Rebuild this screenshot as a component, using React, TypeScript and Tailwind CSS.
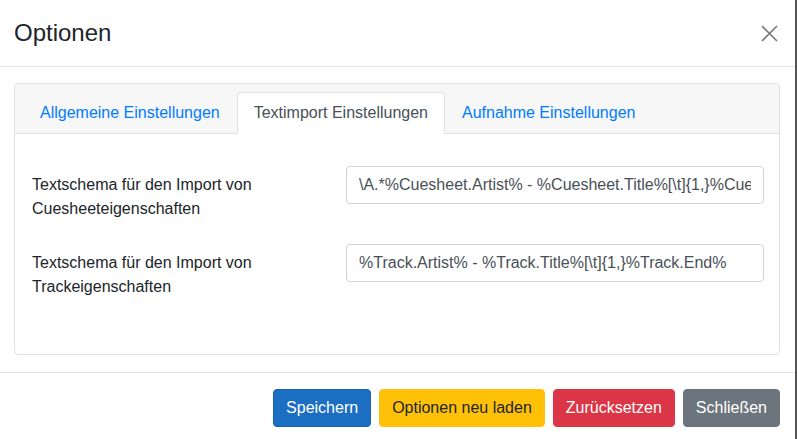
import { useState } from 'react';

const tabs = ['Allgemeine Einstellungen', 'Textimport Einstellungen', 'Aufnahme Einstellungen'];

function Field({ label, value }: { label: string; value: string }) {
  return (
    <div className="grid grid-cols-[298px_1fr] gap-4">
      <label className="pt-[7px] text-[16px] leading-6 text-[#212529]">{label}</label>
      <input
        readOnly
        value={value}
        className="h-[38px] w-full rounded border border-[#ced4da] bg-white px-3 text-[16px] text-[#495057] outline-none"
      />
    </div>
  );
}

export default function App() {
  const [active, setActive] = useState(1);

  return (
    <div className="flex h-[439px] w-[797px] overflow-hidden bg-white font-['Liberation_Sans',Arial,sans-serif]">
      <div className="flex w-[795px] flex-col">
        <div className="flex h-[67px] items-center justify-between border-b border-[#e4e4e4] pl-[14px] pr-[17px]">
          <h4 className="pb-[1px] text-[24px] leading-[29px] text-[#212529]">Optionen</h4>
          <button className="text-[#777]">
            <svg width="17" height="17" viewBox="0 0 17 17" fill="none" stroke="currentColor" strokeWidth="1.6">
              <path d="M1 1L16 16M16 1L1 16" />
            </svg>
          </button>
        </div>

        <div className="pl-[14px] pr-[15px] pt-[16px]">
          <div className="rounded border border-[#dfdfdf]">
            <div className="rounded-t border-b border-[#dfdfdf] bg-[#f7f7f7] pl-[8px] pt-[8px]">
              <ul className="-mb-px flex">
                {tabs.map((t, i) => (
                  <li key={t}>
                    <button
                      onClick={() => setActive(i)}
                      className={
                        i === active
                          ? 'rounded-t border border-[#dee2e6] border-b-white bg-white px-4 py-2 text-[16px] leading-6 text-[#495057]'
                          : 'rounded-t border border-transparent px-4 py-2 text-[16px] leading-6 text-[#007bff]'
                      }
                    >
                      {t}
                    </button>
                  </li>
                ))}
              </ul>
            </div>
            <div className="flex h-[220px] flex-col gap-[23px] pl-[17px] pr-[15px] pt-[32px]">
              <Field
                label="Textschema für den Import von Cuesheeteigenschaften"
                value="\A.*%Cuesheet.Artist% - %Cuesheet.Title%[\t]{1,}%Cuesheet.AudioFile%"
              />
              <Field
                label="Textschema für den Import von Trackeigenschaften"
                value="%Track.Artist% - %Track.Title%[\t]{1,}%Track.End%"
              />
            </div>
          </div>
        </div>

        <div className="mt-[17px] flex justify-end gap-2 border-t border-[#e4e4e4] pr-[15px] pt-[16px]">
          <button className="h-[38px] rounded border border-[#1861ac] bg-[#1b6ec2] px-3 text-[16px] text-white">Speichern</button>
          <button className="h-[38px] rounded border border-[#ffc107] bg-[#ffc107] px-3 text-[16px] text-[#212529]">Optionen neu laden</button>
          <button className="h-[38px] rounded border border-[#dc3545] bg-[#dc3545] px-3 text-[16px] text-white">Zurücksetzen</button>
          <button className="h-[38px] rounded border border-[#6c757d] bg-[#6c757d] px-3 text-[16px] text-white">Schließen</button>
        </div>
      </div>
      <div className="w-[2px] bg-[#555]" />
    </div>
  );
}
